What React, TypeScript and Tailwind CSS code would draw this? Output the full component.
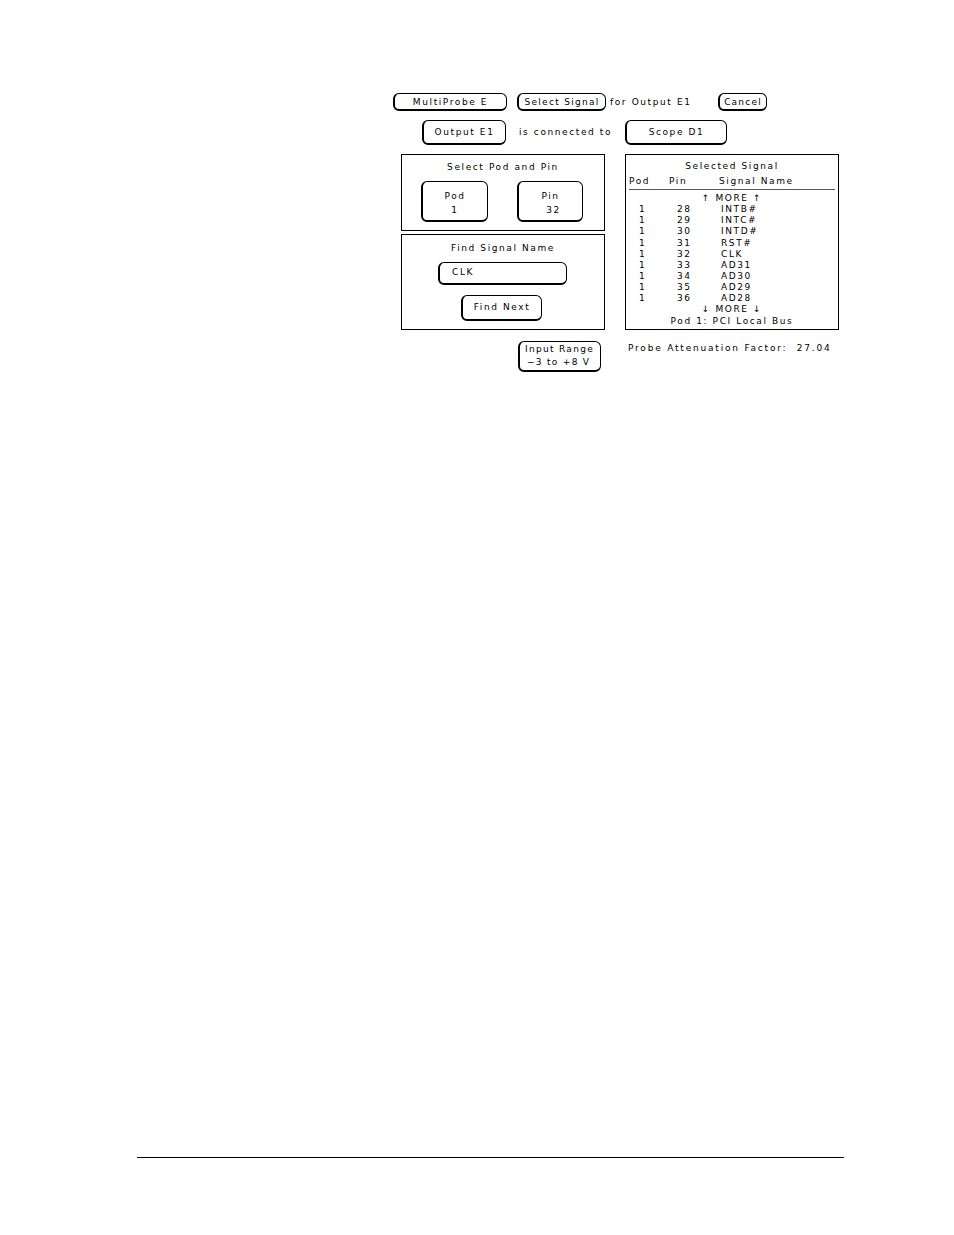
import React from "react";

const font = { fontFamily: '"DejaVu Sans", "Liberation Sans", sans-serif' };

const Btn: React.FC<{ className?: string; children: React.ReactNode }> = ({ className = "", children }) => (
  <div className={`flex flex-col items-center justify-center rounded-[6px] border border-b-2 border-l-2 border-black bg-white leading-[11px] ${className}`}>
    {children}
  </div>
);

const rows = [
  ["1", "28", "INTB#"],
  ["1", "29", "INTC#"],
  ["1", "30", "INTD#"],
  ["1", "31", "RST#"],
  ["1", "32", "CLK"],
  ["1", "33", "AD31"],
  ["1", "34", "AD30"],
  ["1", "35", "AD29"],
  ["1", "36", "AD28"],
];

const App: React.FC = () => {
  return (
    <div className="relative h-[1235px] w-[954px] bg-white pt-[93px] text-[9px] tracking-[1.6px] text-black" style={font}>
      {/* top row */}
      <div className="ml-[393px] flex h-[18px] items-center">
        <Btn className="h-[18px] w-[114px] pt-[1px]">MultiProbe E</Btn>
        <Btn className="ml-[10px] h-[18px] w-[89px] pt-[1px] tracking-[1.3px]">Select Signal</Btn>
        <span className="ml-[4px] mt-[1px] w-[108px]">for Output E1</span>
        <Btn className="h-[18px] w-[49px] pt-[1px] tracking-[1.2px]">Cancel</Btn>
      </div>

      <div className="ml-[422px] mt-[9px] flex h-[25px] items-center">
        <Btn className="h-[25px] w-[84px]">Output E1</Btn>
        <span className="ml-[13px] w-[106px]">is connected to</span>
        <Btn className="h-[25px] w-[102px]">Scope D1</Btn>
      </div>

      <div className="ml-[401px] mt-[9px] flex gap-[20px]">
        <div className="flex w-[204px] flex-col gap-[3px]">
          <div className="flex h-[77px] flex-col border border-black">
            <div className="mt-[6px] text-center">Select Pod and Pin</div>
            <div className="mt-[6px] flex">
              <Btn className="ml-[19px] h-[41px] w-[67px] gap-[3px] pt-[6px]">
                <span>Pod</span>
                <span>1</span>
              </Btn>
              <Btn className="ml-[29px] h-[41px] w-[66px] gap-[3px] pt-[6px]">
                <span>Pin</span>
                <span className="pl-[6px]">32</span>
              </Btn>
            </div>
          </div>
          <div className="flex h-[96px] flex-col border border-black">
            <div className="mt-[7px] text-center">Find Signal Name</div>
            <Btn className="ml-[36px] mt-[6px] h-[23px] w-[129px] !items-start pl-[12px]">CLK</Btn>
            <Btn className="ml-[59px] mt-[10px] h-[26px] w-[81px]">Find Next</Btn>
          </div>
        </div>

        <div className="flex h-[176px] w-[214px] flex-col border border-black px-[3px] leading-[11.1px]">
          <div className="mt-[6px] text-center">Selected Signal</div>
          <div className="mt-[4px] flex border-b border-[#555] pb-[2px]">
            <span className="w-[40px]">Pod</span>
            <span className="w-[50px]">Pin</span>
            <span>Signal Name</span>
          </div>
          <div className="mt-[3px] text-center">↑ MORE ↑</div>
          {rows.map(([pod, pin, name]) => (
            <div key={pin} className="flex">
              <span className="w-[48px] pl-[10px]">{pod}</span>
              <span className="w-[44px]">{pin}</span>
              <span>{name}</span>
            </div>
          ))}
          <div className="text-center">↓ MORE ↓</div>
          <div className="mt-[1px] text-center">Pod 1: PCI Local Bus</div>
        </div>
      </div>

      <div className="mt-[11px] flex items-center">
        <Btn className="ml-[518px] h-[31px] w-[83px] !items-start gap-[2px] pl-[5px] tracking-[1.3px]">
          <span>Input Range</span>
          <span className="pl-[2px]">−3 to +8 V</span>
        </Btn>
        <span className="ml-[27px] -mt-[16px] tracking-[1.8px]">Probe Attenuation Factor:&nbsp;&nbsp;27.04</span>
      </div>

      <div className="ml-[137px] mt-[785px] h-[1px] w-[707px] bg-black" />
    </div>
  );
};

export default App;
